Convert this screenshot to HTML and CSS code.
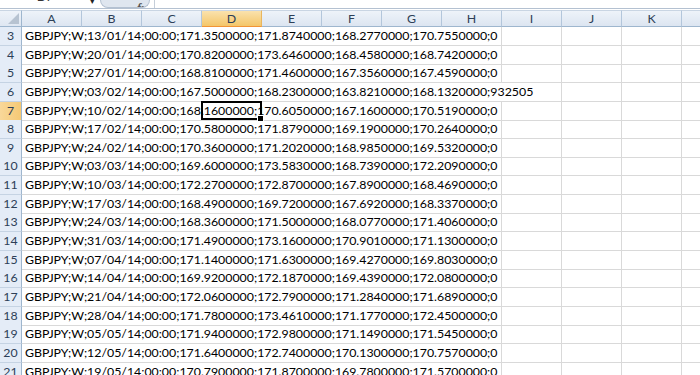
FILE: index.html
```html
<!DOCTYPE html>
<html lang="en">
<head>
  <meta charset="UTF-8" />
  <title>GBPJPY weekly – Sheet1</title>
  <link rel="stylesheet" href="styles.css">
</head>
<body>
  <div class="formula-bar">
    <div class="name-box"><span>D7</span></div>
    <span class="name-arrow">&#9662;</span>
    <div class="grip"><span class="fx">fx</span></div>
    <div class="formula"></div>
  </div>

  <div class="sheet">
    <div class="row head">
      <div class="corner"></div>
      <div class="col">A</div>
      <div class="col">B</div>
      <div class="col">C</div>
      <div class="col active">D</div>
      <div class="col">E</div>
      <div class="col">F</div>
      <div class="col">G</div>
      <div class="col">H</div>
      <div class="col">I</div>
      <div class="col">J</div>
      <div class="col">K</div>
      <div class="col"></div>
    </div>

    <div class="row"><div class="num">3</div><div class="cell text">GBPJPY;W;13/01/14;00:00;171.3500000;171.8740000;168.2770000;170.7550000;0</div><div class="cell"></div><div class="cell"></div><div class="cell"></div><div class="cell"></div></div>
    <div class="row"><div class="num">4</div><div class="cell text">GBPJPY;W;20/01/14;00:00;170.8200000;173.6460000;168.4580000;168.7420000;0</div><div class="cell"></div><div class="cell"></div><div class="cell"></div><div class="cell"></div></div>
    <div class="row"><div class="num">5</div><div class="cell text">GBPJPY;W;27/01/14;00:00;168.8100000;171.4600000;167.3560000;167.4590000;0</div><div class="cell"></div><div class="cell"></div><div class="cell"></div><div class="cell"></div></div>
    <div class="row"><div class="num">6</div><div class="cell text long">GBPJPY;W;03/02/14;00:00;167.5000000;168.2300000;163.8210000;168.1320000;932505</div><div class="cell"></div><div class="cell"></div><div class="cell"></div></div>
    <div class="row"><div class="num active">7</div><div class="cell text">GBPJPY;W;10/02/14;00:00;168.1600000;170.6050000;167.1600000;170.5190000;0</div><div class="cell"></div><div class="cell"></div><div class="cell"></div><div class="cell"></div></div>
    <div class="row"><div class="num">8</div><div class="cell text">GBPJPY;W;17/02/14;00:00;170.5800000;171.8790000;169.1900000;170.2640000;0</div><div class="cell"></div><div class="cell"></div><div class="cell"></div><div class="cell"></div></div>
    <div class="row"><div class="num">9</div><div class="cell text">GBPJPY;W;24/02/14;00:00;170.3600000;171.2020000;168.9850000;169.5320000;0</div><div class="cell"></div><div class="cell"></div><div class="cell"></div><div class="cell"></div></div>
    <div class="row"><div class="num">10</div><div class="cell text">GBPJPY;W;03/03/14;00:00;169.6000000;173.5830000;168.7390000;172.2090000;0</div><div class="cell"></div><div class="cell"></div><div class="cell"></div><div class="cell"></div></div>
    <div class="row"><div class="num">11</div><div class="cell text">GBPJPY;W;10/03/14;00:00;172.2700000;172.8700000;167.8900000;168.4690000;0</div><div class="cell"></div><div class="cell"></div><div class="cell"></div><div class="cell"></div></div>
    <div class="row"><div class="num">12</div><div class="cell text">GBPJPY;W;17/03/14;00:00;168.4900000;169.7200000;167.6920000;168.3370000;0</div><div class="cell"></div><div class="cell"></div><div class="cell"></div><div class="cell"></div></div>
    <div class="row"><div class="num">13</div><div class="cell text">GBPJPY;W;24/03/14;00:00;168.3600000;171.5000000;168.0770000;171.4060000;0</div><div class="cell"></div><div class="cell"></div><div class="cell"></div><div class="cell"></div></div>
    <div class="row"><div class="num">14</div><div class="cell text">GBPJPY;W;31/03/14;00:00;171.4900000;173.1600000;170.9010000;171.1300000;0</div><div class="cell"></div><div class="cell"></div><div class="cell"></div><div class="cell"></div></div>
    <div class="row"><div class="num">15</div><div class="cell text">GBPJPY;W;07/04/14;00:00;171.1400000;171.6300000;169.4270000;169.8030000;0</div><div class="cell"></div><div class="cell"></div><div class="cell"></div><div class="cell"></div></div>
    <div class="row"><div class="num">16</div><div class="cell text">GBPJPY;W;14/04/14;00:00;169.9200000;172.1870000;169.4390000;172.0800000;0</div><div class="cell"></div><div class="cell"></div><div class="cell"></div><div class="cell"></div></div>
    <div class="row"><div class="num">17</div><div class="cell text">GBPJPY;W;21/04/14;00:00;172.0600000;172.7900000;171.2840000;171.6890000;0</div><div class="cell"></div><div class="cell"></div><div class="cell"></div><div class="cell"></div></div>
    <div class="row"><div class="num">18</div><div class="cell text">GBPJPY;W;28/04/14;00:00;171.7800000;173.4610000;171.1770000;172.4500000;0</div><div class="cell"></div><div class="cell"></div><div class="cell"></div><div class="cell"></div></div>
    <div class="row"><div class="num">19</div><div class="cell text">GBPJPY;W;05/05/14;00:00;171.9400000;172.9800000;171.1490000;171.5450000;0</div><div class="cell"></div><div class="cell"></div><div class="cell"></div><div class="cell"></div></div>
    <div class="row"><div class="num">20</div><div class="cell text">GBPJPY;W;12/05/14;00:00;171.6400000;172.7400000;170.1300000;170.7570000;0</div><div class="cell"></div><div class="cell"></div><div class="cell"></div><div class="cell"></div></div>
    <div class="row"><div class="num">21</div><div class="cell text">GBPJPY;W;19/05/14;00:00;170.7900000;171.8700000;169.7800000;171.5700000;0</div><div class="cell"></div><div class="cell"></div><div class="cell"></div><div class="cell"></div></div>

    <!-- active cell D7 -->
    <div class="selection"><span class="fill-handle"></span></div>
  </div>
</body>
</html>
```

FILE: styles.css
```css
body {
  margin: 0;
  background: #fff;
  font-family: Lato, 'Liberation Sans', sans-serif;
  font-size: 12.35px;
  color: #000;
  overflow: hidden;
}

/* formula bar, cut off at the top of the shot */
.formula-bar {
  display: flex;
  height: 8px;
  border-bottom: 1px solid #b4c1d1;
  overflow: hidden;
}

.name-box {
  width: 90px;
  text-align: center;
  overflow: hidden;
}

.name-box span {
  display: block;
  margin-top: -10px;
  line-height: 14px;
  color: #333;
}

.name-arrow {
  font-size: 9px;
  line-height: 8px;
  margin-top: -3px;
  color: #222;
}

.grip {
  width: 50px;
  margin-left: 5px;
  height: 8px;
  background: #dfe6ef;
  border: 1px solid #b4c1d1;
  border-top: none;
  border-radius: 0 0 14px 14px;
  box-sizing: border-box;
  text-align: right;
  overflow: hidden;
}

.fx {
  display: inline-block;
  margin-top: -8px;
  margin-right: 2px;
  font-family: 'Liberation Serif', serif;
  font-style: italic;
  font-weight: bold;
  font-size: 12px;
  line-height: 12px;
  color: #555;
}

.formula {
  flex: 1;
  margin-left: 4px;
  border-left: 1px solid #c5ced9;
}

/* grid */
.sheet {
  position: relative;
  margin-top: 1px;
}

.row {
  display: grid;
  grid-template-columns: 22px repeat(12, 60px);
  height: 18.65px;
}

.row.head {
  height: 17px;
}

.corner {
  position: relative;
  background: linear-gradient(#eef3f9, #dfe7f2);
  border-right: 1px solid #9eb6ce;
  border-bottom: 1px solid #9eb6ce;
  border-top: 1px solid #c9d5e3;
}

.corner::after {
  content: "";
  position: absolute;
  right: 2px;
  bottom: 2px;
  border-left: 11px solid transparent;
  border-bottom: 11px solid #b7c3d1;
}

.col {
  background: linear-gradient(#eef3f9, #dce5f1);
  border-right: 1px solid #b3c6db;
  border-bottom: 1px solid #9eb6ce;
  border-top: 1px solid #c9d5e3;
  text-align: center;
  line-height: 15px;
  color: #2d3f57;
}

.col.active {
  background: linear-gradient(#fae2ad, #f4c669);
  border-bottom-color: #f29436;
  border-right-color: #e9b65e;
}

.num {
  background: #e4ecf7;
  border-right: 1px solid #9eb6ce;
  border-bottom: 1px solid #c5d3e3;
  text-align: center;
  line-height: 18px;
  color: #2d3f57;
  box-sizing: border-box;
}

.num.active {
  background: linear-gradient(90deg, #f9d89a, #f5c974);
  border-bottom-color: #f0b44e;
}

.cell {
  border-right: 1px solid #d9d9d9;
  border-bottom: 1px solid #d9d9d9;
  box-sizing: border-box;
}

.cell.text {
  grid-column: span 8;
  padding-left: 3px;
  line-height: 18px;
  white-space: nowrap;
}

.cell.text.long {
  grid-column: span 9;
}

.selection {
  position: absolute;
  left: 201px;
  top: 91px;
  width: 61px;
  height: 19px;
  border: 2px solid #000;
  box-sizing: border-box;
}

.fill-handle {
  position: absolute;
  right: -4px;
  bottom: -4px;
  width: 5px;
  height: 5px;
  background: #000;
  border: 1px solid #fff;
}
```
